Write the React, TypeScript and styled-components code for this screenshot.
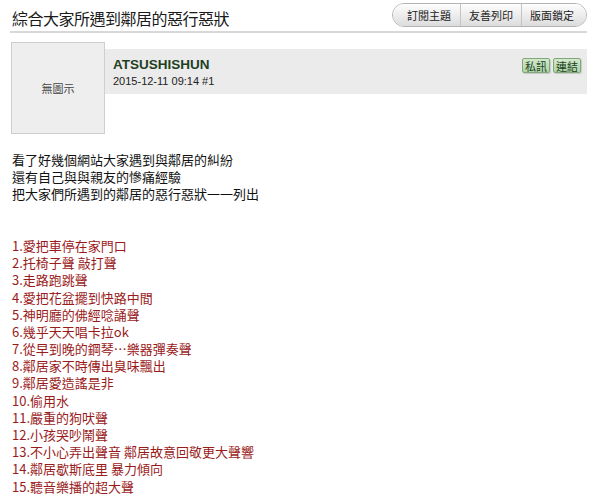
import styled, { createGlobalStyle } from "styled-components"

const GlobalStyle = createGlobalStyle`
  body {
    margin: 0;
    background: #fff;
    font-family: "Liberation Sans", Arial, "Noto Sans CJK TC", sans-serif;
    color: #111;
  }
`

const tools = ["訂閱主題", "友善列印", "版面鎖定"]

const intro = [
  "看了好幾個網站大家遇到與鄰居的糾紛",
  "還有自己與與親友的慘痛經驗",
  "把大家們所遇到的鄰居的惡行惡狀一一列出",
]

const items = [
  "愛把車停在家門口",
  "托椅子聲 敲打聲",
  "走路跑跳聲",
  "愛把花盆擺到快路中間",
  "神明廳的佛經唸誦聲",
  "幾乎天天唱卡拉ok",
  "從早到晚的鋼琴…樂器彈奏聲",
  "鄰居家不時傳出臭味飄出",
  "鄰居愛造謠是非",
  "偷用水",
  "嚴重的狗吠聲",
  "小孩哭吵鬧聲",
  "不小心弄出聲音 鄰居故意回敬更大聲響",
  "鄰居歇斯底里 暴力傾向",
  "聽音樂播的超大聲",
]

export default function App() {
  return (
    <>
      <GlobalStyle />
      <Page>
        <TitleBar>
          <Title>綜合大家所遇到鄰居的惡行惡狀</Title>
          <ToolGroup>
            {tools.map((t) => (
              <ToolButton key={t}>{t}</ToolButton>
            ))}
          </ToolGroup>
        </TitleBar>

        <Post>
          <Avatar>無圖示</Avatar>
          <PostMain>
            <PostHeader>
              <Author>
                <Name>ATSUSHISHUN</Name>
                <Meta>2015-12-11 09:14 #1</Meta>
              </Author>
              <Actions>
                <SmallButton>私訊</SmallButton>
                <SmallButton>連結</SmallButton>
              </Actions>
            </PostHeader>
          </PostMain>
        </Post>

        <Content>
          {intro.map((line) => (
            <Line key={line}>{line}</Line>
          ))}
          <Blank />
          <Blank />
          <List>
            {items.map((item, i) => (
              <Line key={item} $red>
                {i + 1}.{item}
              </Line>
            ))}
          </List>
        </Content>
      </Page>
    </>
  )
}

const Page = styled.div`
  width: 577px;
  padding-left: 10px;
`

const TitleBar = styled.div`
  display: flex;
  justify-content: space-between;
  align-items: center;
  height: 29px;
  padding-top: 2px;
  border-bottom: 2px solid #d8d8d8;
`

const Title = styled.h1`
  margin: 0 0 0 2px;
  padding-top: 3px;
  font-family: "Noto Sans CJK TC", sans-serif;
  font-size: 16px;
  font-weight: normal;
  letter-spacing: -0.5px;
  color: #1a1a1a;
`

const ToolGroup = styled.div`
  display: flex;
  height: 22px;
  border: 1px solid #b4b4b4;
  border-radius: 12px;
  overflow: hidden;
  margin-bottom: 4px;
`

const ToolButton = styled.button`
  height: 100%;
  padding: 0 8px;
  border: none;
  border-left: 1px solid #c4c4c4;
  background: linear-gradient(#fdfdfd, #dcdcdc);
  font-family: "Noto Sans CJK TC", sans-serif;
  font-size: 11px;
  color: #222;
  cursor: pointer;

  &:first-child {
    border-left: none;
    padding-left: 14px;
    padding-right: 9px;
  }

  &:last-child {
    padding-right: 12px;
  }
`

const Post = styled.div`
  display: flex;
  margin-top: 9px;
  margin-left: 1px;
`

const Avatar = styled.div`
  width: 92px;
  height: 90px;
  border: 1px solid #cfcfcf;
  background: #eeeeee;
  display: flex;
  align-items: center;
  justify-content: center;
  font-family: "Noto Sans CJK TC", sans-serif;
  font-size: 11px;
  color: #444;
`

const PostMain = styled.div`
  flex: 1;
  padding-top: 7px;
`

const PostHeader = styled.div`
  display: flex;
  justify-content: space-between;
  align-items: flex-start;
  height: 45px;
  box-sizing: border-box;
  padding: 8px 6px 0 8px;
  background: #ebebeb;
`

const Author = styled.div`
  display: flex;
  flex-direction: column;
  gap: 3px;
`

const Name = styled.span`
  font-size: 13.5px;
  font-weight: bold;
  color: #1f3f1f;
  line-height: 15px;
`

const Meta = styled.span`
  font-size: 11px;
  color: #222;
  line-height: 13px;
`

const Actions = styled.div`
  display: flex;
  gap: 3px;
  padding-top: 1px;
`

const SmallButton = styled.span`
  display: inline-flex;
  align-items: center;
  height: 13px;
  padding: 0 2px;
  border: 1px solid #80a87a;
  border-radius: 2px;
  background: linear-gradient(#d2e8cb, #b0d4a8);
  box-shadow: 1px 1px 1px rgba(0, 0, 0, 0.15);
  font-family: "Noto Sans CJK TC", sans-serif;
  font-size: 11px;
  color: #223f22;
`

const Content = styled.div`
  margin-top: 17px;
  padding-left: 2px;
  font-family: "Noto Sans CJK TC", sans-serif;
  font-size: 13px;
`

const List = styled.div`
  display: grid;
  grid-auto-rows: 17.2px;
`

const Line = styled.div<{ $red?: boolean }>`
  line-height: 17.2px;
  white-space: nowrap;
  color: ${({ $red }) => ($red ? "#9a1b1b" : "#111")};
`

const Blank = styled.div`
  height: 17.2px;
`
